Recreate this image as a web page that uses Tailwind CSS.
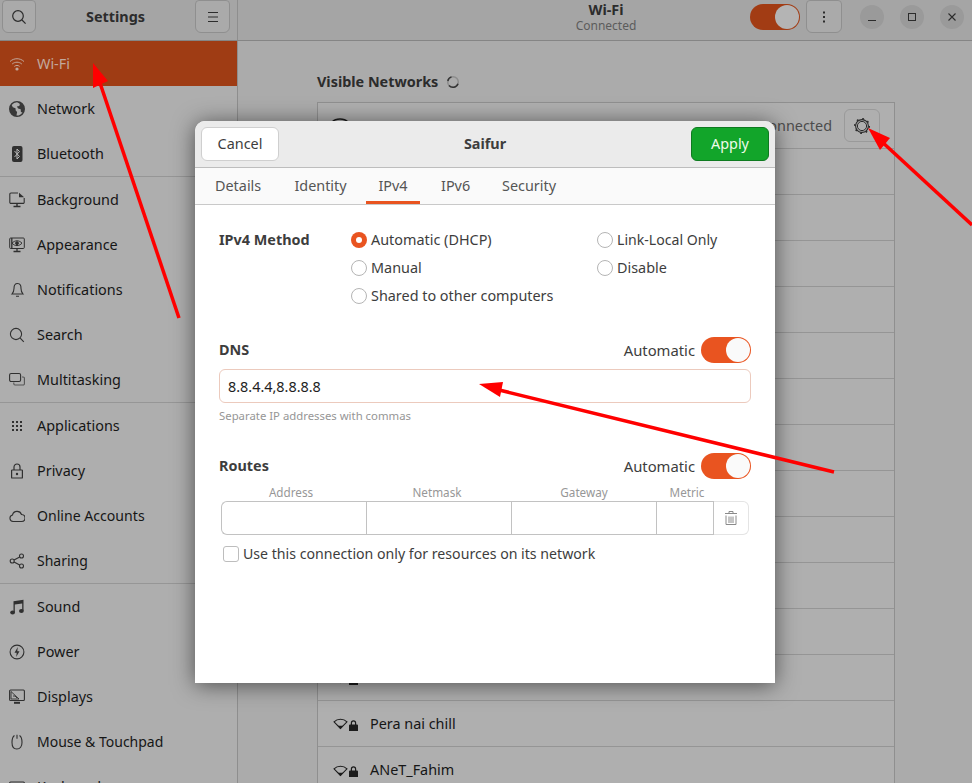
<!DOCTYPE html>
<html lang="en">
<head>
  <meta charset="UTF-8">
  <meta name="viewport" content="width=device-width, initial-scale=1.0">
  <title>Settings - Wi-Fi</title>
  <script src="https://cdn.jsdelivr.net/npm/@tailwindcss/browser@4"></script>
</head>
<body class="bg-[#ababab] font-['Noto_Sans',sans-serif] text-[14.4px] text-[#161616]">
  <div class="relative w-[972px] h-[783px] overflow-hidden flex flex-col">

    <!-- title bar -->
    <header class="flex h-[41px] shrink-0 bg-[#a5a5a5] border-b border-[#858585]">
      <div class="w-[238px] shrink-0 flex items-start justify-between pl-[2px] pr-[7px] border-r border-[#8e8e8e]">
        <button class="w-[34px] h-[33px] rounded-b-[6px] rounded-t-[4px] border border-[#8f8f8f] bg-[#aaaaaa] flex items-center justify-center">
          <svg class="w-4 h-4" viewBox="0 0 16 16" fill="none" stroke="#2c2c2c" stroke-width="1.2"><circle cx="7" cy="7" r="5.3"/><path d="M11 11l3.6 3.6"/></svg>
        </button>
        <span class="font-bold text-[#2c2c2c] h-[33px] leading-[34px]">Settings</span>
        <button class="w-[35px] h-[33px] rounded-b-[6px] rounded-t-[4px] border border-[#8f8f8f] bg-[#aaaaaa] flex items-center justify-center">
          <svg class="w-4 h-4" viewBox="0 0 16 16" fill="none" stroke="#2c2c2c" stroke-width="1"><path d="M3 3.5h10M3 8h10M3 12.5h10"/></svg>
        </button>
      </div>
      <div class="flex-1 relative flex items-start pr-[8px]">
        <div class="w-[736px] text-center absolute left-0 top-0">
          <div class="font-bold text-[#2c2c2c] leading-[18px] mt-[1px]">Wi-Fi</div>
          <div class="text-[12px] text-[#5c5c5c] leading-[14px]">Connected</div>
        </div>
        <div class="ml-auto flex items-start">
          <div class="mt-[4px] w-[50px] h-[26px] rounded-full bg-[#a23c14] relative">
            <span class="absolute right-[1px] top-[1px] w-[24px] h-[24px] rounded-full bg-[#b4b4b4]"></span>
          </div>
          <button class="ml-[6px] w-[36px] h-[33px] rounded-b-[6px] rounded-t-[4px] border border-[#8f8f8f] bg-[#aaaaaa] flex items-center justify-center">
            <svg class="w-4 h-4" viewBox="0 0 16 16" fill="#2c2c2c"><rect x="7" y="2.5" width="2" height="2"/><rect x="7" y="7" width="2" height="2"/><rect x="7" y="11.5" width="2" height="2"/></svg>
          </button>
          <div class="ml-[18px] mt-[5px] flex gap-[16px]">
            <span class="w-[24px] h-[24px] rounded-full bg-[#9a9a9a] flex items-center justify-center">
              <svg class="w-4 h-4" viewBox="0 0 16 16" stroke="#2c2c2c" stroke-width="1"><path d="M4 11.5h8"/></svg>
            </span>
            <span class="w-[24px] h-[24px] rounded-full bg-[#9a9a9a] flex items-center justify-center">
              <svg class="w-4 h-4" viewBox="0 0 16 16" fill="none" stroke="#2c2c2c" stroke-width="1"><rect x="4.5" y="4.5" width="7" height="7"/></svg>
            </span>
            <span class="w-[24px] h-[24px] rounded-full bg-[#9a9a9a] flex items-center justify-center">
              <svg class="w-4 h-4" viewBox="0 0 16 16" fill="none" stroke="#2c2c2c" stroke-width="1.1"><path d="M4.5 4.5l7 7M11.5 4.5l-7 7"/></svg>
            </span>
          </div>
        </div>
      </div>
    </header>

    <div class="flex flex-1 min-h-0">
      <!-- sidebar -->
      <nav class="w-[238px] shrink-0 bg-[#aeaeae] border-r border-[#8e8e8e] overflow-hidden">
        <a class="flex items-center h-[45px] pl-[9px] gap-[12px] bg-[#9f3c14] text-[#c2a89c]">
          <svg class="w-4 h-4 shrink-0" viewBox="0 0 16 16" fill="none" stroke="#c2a89c" stroke-width="1"><path d="M1 5.5C5 1.8 11 1.8 15 5.5M3.2 8C6 5.6 10 5.6 12.8 8M5.4 10.4C7 9.1 9 9.1 10.6 10.4"/><circle cx="8" cy="13" r="1.6" fill="#c2a89c" stroke="none"/></svg>
          <span>Wi-Fi</span>
        </a>
        <a class="flex items-center h-[45px] pl-[9px] gap-[12px]">
          <svg class="w-4 h-4 shrink-0" viewBox="0 0 16 16" fill="#383838"><path fill-rule="evenodd" d="M8 0a8 8 0 1 1 0 16A8 8 0 0 1 8 0zM8 1.300a6.700 6.700 0 0 0-5.300 2.600l1.100 2.300 2.700 1.100.2 2.100 1.400 1.600-.6 3.600a6.700 6.700 0 0 0 6-3.100l-1.600-.6-.2-2.600-2.600-.8-1.200-2 2.400-.6.6-1.900A6.700 6.700 0 0 0 8 1.300z"/></svg>
          <span>Network</span>
        </a>
        <a class="flex items-center h-[45px] pl-[9px] gap-[12px]">
          <svg class="w-4 h-4 shrink-0" viewBox="0 0 16 16"><rect x="3" y="0" width="10.500" height="16" rx="2" fill="#303030"/><path d="M5.500 5l5 5.500L8 13V3l2.500 2.500-5 5.500" fill="none" stroke="#b8b8b8" stroke-width="1"/></svg>
          <span>Bluetooth</span>
        </a>
        <div class="h-px bg-[#969696]"></div>
        <a class="flex items-center h-[45px] pl-[9px] gap-[12px]">
          <svg class="w-4 h-4 shrink-0" viewBox="0 0 16 16" fill="none" stroke="#303030" stroke-width="1.100"><path d="M9 1H2a1.200 1.200 0 0 0-1.200 1.200v8A1.200 1.200 0 0 0 2 11.400h12a1.200 1.200 0 0 0 1.200-1.200V6"/><path d="M10 .8l5.200 4.400H10z" fill="#303030" stroke="none"/><path d="M8 11.500v2.500M4.500 14.500h7" stroke-width="1.400"/></svg>
          <span>Background</span>
        </a>
        <a class="flex items-center h-[45px] pl-[9px] gap-[12px]">
          <svg class="w-4 h-4 shrink-0" viewBox="0 0 16 16" fill="none" stroke="#303030" stroke-width="1"><rect x=".7" y="1" width="14.600" height="10.500" rx="1"/><path d="M3 6.200C6 3 10 3 13 6.200 10 9.400 6 9.400 3 6.200z"/><circle cx="8" cy="6.200" r="1.400" fill="#303030"/><path d="M2.800 1v10.500M8 11.500V14M4.500 14.500h7" stroke-width="1.300"/></svg>
          <span>Appearance</span>
        </a>
        <a class="flex items-center h-[45px] pl-[9px] gap-[12px]">
          <svg class="w-4 h-4 shrink-0" viewBox="0 0 16 16" fill="none" stroke="#303030" stroke-width="1.100"><path d="M8.500 1.500C5.500 1.500 5 4 5 6.500c0 2.500-.7 4-2 5.500h11c-1.300-1.500-2-3-2-5.500 0-2.500-.5-5-3.500-5zM7 14.300h3"/></svg>
          <span>Notifications</span>
        </a>
        <a class="flex items-center h-[45px] pl-[9px] gap-[12px]">
          <svg class="w-4 h-4 shrink-0" viewBox="0 0 16 16" fill="none" stroke="#303030" stroke-width="1.100"><circle cx="7" cy="7" r="5.600"/><path d="M11.200 11.200l3.600 3.600"/></svg>
          <span>Search</span>
        </a>
        <a class="flex items-center h-[45px] pl-[9px] gap-[12px]">
          <svg class="w-4 h-4 shrink-0" viewBox="0 0 16 16" fill="none" stroke="#303030" stroke-width="1.100"><rect x=".6" y="1.500" width="11" height="8" rx="1.500"/><path d="M13 5h1.200a1.200 1.200 0 0 1 1.200 1.200v5.600a1.200 1.200 0 0 1-1.200 1.200H6a1.200 1.200 0 0 1-1.200-1.200V10.500" stroke="#555"/></svg>
          <span>Multitasking</span>
        </a>
        <div class="h-px bg-[#969696]"></div>
        <a class="flex items-center h-[45px] pl-[9px] gap-[12px]">
          <svg class="w-4 h-4 shrink-0" viewBox="0 0 16 16" fill="#303030"><rect x="3" y="3" width="2" height="2"/><rect x="7" y="3" width="2" height="2"/><rect x="11" y="3" width="2" height="2"/><rect x="3" y="7" width="2" height="2"/><rect x="7" y="7" width="2" height="2"/><rect x="11" y="7" width="2" height="2"/><rect x="3" y="11" width="2" height="2"/><rect x="7" y="11" width="2" height="2"/><rect x="11" y="11" width="2" height="2"/></svg>
          <span>Applications</span>
        </a>
        <a class="flex items-center h-[45px] pl-[9px] gap-[12px]">
          <svg class="w-4 h-4 shrink-0" viewBox="0 0 16 16" fill="none" stroke="#303030" stroke-width="1.200"><rect x="2.600" y="7" width="10.800" height="8" rx=".6"/><path d="M5 7V4a3 3 0 0 1 6 0v3"/><circle cx="8" cy="11" r="1.200" fill="#303030" stroke="none"/></svg>
          <span>Privacy</span>
        </a>
        <a class="flex items-center h-[45px] pl-[9px] gap-[12px]">
          <svg class="w-4 h-4 shrink-0" viewBox="0 0 16 16" fill="none" stroke="#303030" stroke-width="1.100"><path d="M4 13.500a3.300 3.300 0 0 1-.5-6.500 4.700 4.700 0 0 1 9-.5 3.500 3.500 0 0 1 0 7z"/></svg>
          <span class="text-[14.1px]">Online Accounts</span>
        </a>
        <a class="flex items-center h-[45px] pl-[9px] gap-[12px]">
          <svg class="w-4 h-4 shrink-0" viewBox="0 0 16 16" fill="none" stroke="#303030" stroke-width="1.100"><circle cx="3.200" cy="8" r="2"/><circle cx="12.500" cy="3" r="2"/><circle cx="12.500" cy="13" r="2"/><path d="M5 7l5.700-3.100M5 9l5.700 3.100"/></svg>
          <span class="text-[14px]">Sharing</span>
        </a>
        <div class="h-px bg-[#969696]"></div>
        <a class="flex items-center h-[45px] pl-[9px] gap-[12px]">
          <svg class="w-4 h-4 shrink-0" viewBox="0 0 16 16" fill="#303030"><path d="M4.500 2.200L14.500.8v11h-1.300V4.400l-7.400 1v8.200H4.500z"/><ellipse cx="3.600" cy="13.500" rx="2.400" ry="1.900"/><ellipse cx="12.400" cy="12" rx="2.400" ry="1.900"/></svg>
          <span>Sound</span>
        </a>
        <a class="flex items-center h-[45px] pl-[9px] gap-[12px]">
          <svg class="w-4 h-4 shrink-0" viewBox="0 0 16 16"><circle cx="8" cy="8" r="6.900" fill="none" stroke="#303030" stroke-width="1.100"/><path d="M8.800 3L5.500 8.800h2.200L7.200 13l3.300-5.800H8.300z" fill="#303030"/></svg>
          <span>Power</span>
        </a>
        <a class="flex items-center h-[45px] pl-[9px] gap-[12px]">
          <svg class="w-4 h-4 shrink-0" viewBox="0 0 16 16" fill="none" stroke="#303030" stroke-width="1.100"><rect x=".6" y="1" width="14.800" height="10.500" rx="1"/><path d="M2 2.500l8 7.500H2zM4 7h2l2 2" stroke-width=".9"/><path d="M5 13.800h6" stroke-width="2"/></svg>
          <span>Displays</span>
        </a>
        <a class="flex items-center h-[45px] pl-[9px] gap-[12px]">
          <svg class="w-4 h-4 shrink-0" viewBox="0 0 16 16" fill="none" stroke="#303030" stroke-width="1.100"><path d="M5.500 1.500C3.800 2.500 3 4.500 3 8.500c0 4 1.500 6.500 4.800 6.500S13 12.500 13 8.500c0-4-.8-6-2.500-7"/><path d="M8 .8v4"/></svg>
          <span class="text-[14px]">Mouse &amp; Touchpad</span>
        </a>
        <a class="flex items-center h-[45px] pl-[9px] gap-[12px]">
          <svg class="w-4 h-4 shrink-0" viewBox="0 0 16 16" fill="none" stroke="#303030" stroke-width="1.100"><rect x=".6" y="3" width="14.800" height="10" rx="1"/></svg>
          <span>Keyboard</span>
        </a>
      </nav>

      <!-- wifi page -->
      <main class="flex-1 min-w-0 bg-[#ababab] pl-[79px] pr-[77px] overflow-hidden">
        <div class="flex items-center gap-[8px] h-[22px] mt-[30px] font-bold text-[#2c2c2c]">
          <h2>Visible Networks</h2>
          <svg class="w-[14px] h-[14px]" viewBox="0 0 14 14" fill="none" stroke-width="1.500"><circle cx="7" cy="7" r="5.300" stroke="#8c8c8c"/><path d="M12 8.800A5.300 5.300 0 0 1 3 10.500M1.800 6A5.300 5.300 0 0 1 5.500 1.900" stroke="#333"/></svg>
        </div>
        <div class="mt-[9px] border border-[#8f8f8f] border-b-0 bg-[#afafaf]">
          <div class="flex items-center h-[46px] border-b border-[#959595] pl-[13px] pr-[14px]">
            <svg class="w-[18px] h-[16px] mt-[-2px]" viewBox="0 0 18 16" fill="none" stroke="#1c1c1c" stroke-width="1.400"><path d="M1 5C5 1 13 1 17 5"/></svg>
            <span class="ml-auto text-[#4c4c4c]">Connected</span>
            <button class="ml-[12px] w-[36px] h-[33px] rounded-[6px] border border-[#9a9a9a] flex items-center justify-center">
              <svg class="w-[18px] h-[18px]" viewBox="0 0 18 18" fill="none" stroke="#2a2a2a"><circle cx="9" cy="9" r="4.600" stroke-width="1"/><circle cx="9" cy="9" r="6.400" stroke-width="1.100"/><circle cx="9" cy="9" r="7.300" stroke-width="1.400" stroke-dasharray="1.800 3.930"/></svg>
            </button>
          </div>
          <div class="h-[46px] border-b border-[#959595]"></div>
          <div class="h-[46px] border-b border-[#959595]"></div>
          <div class="h-[46px] border-b border-[#959595]"></div>
          <div class="h-[46px] border-b border-[#959595]"></div>
          <div class="h-[46px] border-b border-[#959595]"></div>
          <div class="h-[46px] border-b border-[#959595]"></div>
          <div class="h-[46px] border-b border-[#959595]"></div>
          <div class="h-[46px] border-b border-[#959595]"></div>
          <div class="h-[46px] border-b border-[#959595]"></div>
          <div class="h-[46px] border-b border-[#959595]"></div>
          <div class="h-[46px] border-b border-[#959595]"></div>
          <div class="flex items-center h-[46px] border-b border-[#959595] pl-[15px] gap-[1px]">
            <svg class="w-[15px] h-[13px]" viewBox="0 0 15 13" fill="none" stroke="#1c1c1c" stroke-width="1.100"><path d="M7.500 11.500L1 4.800C4.500 1.400 10.500 1.400 14 4.800z"/><path d="M7.500 11.700L4.800 8.800h5.400z" fill="#1c1c1c" stroke="none"/></svg>
            <svg class="w-[9px] h-[11px] mt-[3px]" viewBox="0 0 9 11" fill="#1c1c1c"><path d="M1 4.500h.8V3a2.700 2.700 0 0 1 5.400 0v1.500H8a1 1 0 0 1 1 1V11H0V5.500a1 1 0 0 1 1-1zM3 4.500h3V3a1.500 1.500 0 0 0-3 0z"/></svg>
          </div>
          <div class="flex items-center h-[46px] border-b border-[#959595] pl-[15px] gap-[1px]">
            <svg class="w-[15px] h-[13px]" viewBox="0 0 15 13" fill="none" stroke="#1c1c1c" stroke-width="1.100"><path d="M7.500 11.500L1 4.800C4.500 1.400 10.500 1.400 14 4.800z"/><path d="M7.500 11.700L4.800 8.800h5.400z" fill="#1c1c1c" stroke="none"/></svg>
            <svg class="w-[9px] h-[11px] mt-[3px]" viewBox="0 0 9 11" fill="#1c1c1c"><path d="M1 4.500h.8V3a2.700 2.700 0 0 1 5.400 0v1.500H8a1 1 0 0 1 1 1V11H0V5.500a1 1 0 0 1 1-1zM3 4.500h3V3a1.500 1.500 0 0 0-3 0z"/></svg>
            <span class="ml-[11px]">Pera nai chill</span>
          </div>
          <div class="flex items-center h-[46px] pl-[15px] gap-[1px]">
            <svg class="w-[15px] h-[13px]" viewBox="0 0 15 13" fill="none" stroke="#1c1c1c" stroke-width="1.100"><path d="M7.500 11.500L1 4.800C4.500 1.400 10.500 1.400 14 4.800z"/><path d="M7.500 11.700L4.800 8.800h5.400z" fill="#1c1c1c" stroke="none"/></svg>
            <svg class="w-[9px] h-[11px] mt-[3px]" viewBox="0 0 9 11" fill="#1c1c1c"><path d="M1 4.500h.8V3a2.700 2.700 0 0 1 5.400 0v1.500H8a1 1 0 0 1 1 1V11H0V5.500a1 1 0 0 1 1-1zM3 4.500h3V3a1.500 1.500 0 0 0-3 0z"/></svg>
            <span class="ml-[11px] pb-[1px]">ANeT_Fahim</span>
          </div>
        </div>
      </main>
    </div>

    <!-- connection dialog -->
    <section class="absolute left-[195px] top-[121px] w-[580px] h-[562px] bg-white rounded-t-[10px] shadow-[0_2px_22px_rgba(0,0,0,0.55)] text-[#3d3d3d] flex flex-col">
      <div class="h-[47px] shrink-0 bg-[#ebebeb] rounded-t-[10px] border-b border-[#bdbdbd] flex items-center justify-between px-[6px]">
        <button class="w-[78px] h-[34px] rounded-[6px] bg-white border border-[#cfcfcf]">Cancel</button>
        <span class="font-bold">Saifur</span>
        <button class="w-[78px] h-[34px] rounded-[6px] bg-[#12a52a] border border-[#0e7a20] text-[#eefbe9]">Apply</button>
      </div>
      <div class="h-[37px] shrink-0 bg-[#fafafa] border-b border-[#c9c9c9] flex pl-[20px] text-[#555]">
        <a class="h-[36px] leading-[36px] w-[46px] text-center">Details</a>
        <a class="h-[36px] leading-[36px] w-[53px] ml-[33px] text-center">Identity</a>
        <a class="h-[36px] leading-[36px] w-[54px] ml-[19px] text-center border-b-[3px] border-[#e95420]">IPv4</a>
        <a class="h-[36px] leading-[36px] w-[28px] ml-[21px] text-center">IPv6</a>
        <a class="h-[36px] leading-[36px] w-[54px] ml-[33px] text-center">Security</a>
      </div>

      <div class="px-[24px] pt-[21px]">
        <div class="grid grid-cols-[132px_246px_1fr] auto-rows-[28px] items-center">
          <span class="font-bold">IPv4 Method</span>
          <label class="flex items-center gap-[4px]">
            <span class="w-4 h-4 rounded-full bg-[#e95420] flex items-center justify-center"><span class="w-[6px] h-[6px] rounded-full bg-white"></span></span>
            <span>Automatic (DHCP)</span>
          </label>
          <label class="flex items-center gap-[4px]"><span class="w-4 h-4 rounded-full border border-[#b5b5b5]"></span><span class="text-[14.1px]">Link-Local Only</span></label>
          <span></span>
          <label class="flex items-center gap-[4px]"><span class="w-4 h-4 rounded-full border border-[#b5b5b5]"></span><span>Manual</span></label>
          <label class="flex items-center gap-[4px]"><span class="w-4 h-4 rounded-full border border-[#b5b5b5]"></span><span>Disable</span></label>
          <span></span>
          <label class="flex items-center gap-[4px] col-span-2"><span class="w-4 h-4 rounded-full border border-[#b5b5b5]"></span><span>Shared to other computers</span></label>
        </div>

        <div class="mt-[27px] h-[26px] flex items-center">
          <span class="font-bold">DNS</span>
          <span class="ml-auto mr-[6px] text-[14.8px]">Automatic</span>
          <div class="w-[50px] h-[26px] rounded-full bg-[#e95420] relative"><span class="absolute right-[1px] top-[1px] w-[24px] h-[24px] rounded-full bg-[#fafafa]"></span></div>
        </div>
        <input class="mt-[6px] block w-full h-[34px] rounded-[6px] border border-[#eccabd] px-[8px] text-[#1f1f1f] outline-none" value="8.8.4.4,8.8.8.8">
        <p class="mt-[5px] h-[16px] leading-[16px] text-[11.35px] text-[#969696]">Separate IP addresses with commas</p>

        <div class="mt-[29px] h-[26px] flex items-center">
          <span class="font-bold">Routes</span>
          <span class="ml-auto mr-[6px] text-[14.8px]">Automatic</span>
          <div class="w-[50px] h-[26px] rounded-full bg-[#e95420] relative"><span class="absolute right-[1px] top-[1px] w-[24px] h-[24px] rounded-full bg-[#fafafa]"></span></div>
        </div>
        <div class="mt-[6px] ml-[2px] flex h-[14px] leading-[14px] text-[11.7px] text-[#979797] text-center">
          <span class="w-[140px]">Address</span>
          <span class="w-[152px]">Netmask</span>
          <span class="w-[142px]">Gateway</span>
          <span class="w-[64px]">Metric</span>
        </div>
        <div class="mt-[2px] mx-[2px] flex h-[34px]">
          <div class="w-[145px] border border-r-0 border-[#c2c2c2] rounded-l-[6px]"></div>
          <div class="w-[145px] border border-r-0 border-[#c2c2c2]"></div>
          <div class="w-[145px] border border-r-0 border-[#c2c2c2]"></div>
          <div class="w-[58px] border border-[#c2c2c2]"></div>
          <button class="flex-1 border border-l-0 border-[#e4e4e4] rounded-r-[6px] flex items-center justify-center">
            <svg class="w-4 h-4" viewBox="0 0 16 16" fill="none" stroke="#8a8a8a"><path d="M2 3.500h12M6 3V1.500h4V3M3 5.500v9h10v-9M6 6.500V13M8 6.500V13M10 6.500V13"/></svg>
          </button>
        </div>
        <label class="mt-[11px] ml-[4px] flex items-center gap-[4px] h-[16px]">
          <span class="w-4 h-4 rounded-[3px] border border-[#bdbdbd]"></span>
          <span class="text-[14.15px]">Use this connection only for resources on its network</span>
        </label>
      </div>
    </section>

    <!-- annotation arrows -->
    <svg class="absolute inset-0 w-[972px] h-[783px] pointer-events-none" viewBox="0 0 972 783" fill="#ff0000" stroke="none">
      <path d="M179 318L99 80" stroke="#ff0000" stroke-width="3.500" fill="none"/>
      <path d="M93 63L93 88L108 81z"/>
      <path d="M972 225L880 140" stroke="#ff0000" stroke-width="3.500" fill="none"/>
      <path d="M868 128L890 138L880 150z"/>
      <path d="M834 472L495 389" stroke="#ff0000" stroke-width="3.500" fill="none"/>
      <path d="M479 384L503 382L500 397z"/>
    </svg>
  </div>
</body>
</html>
